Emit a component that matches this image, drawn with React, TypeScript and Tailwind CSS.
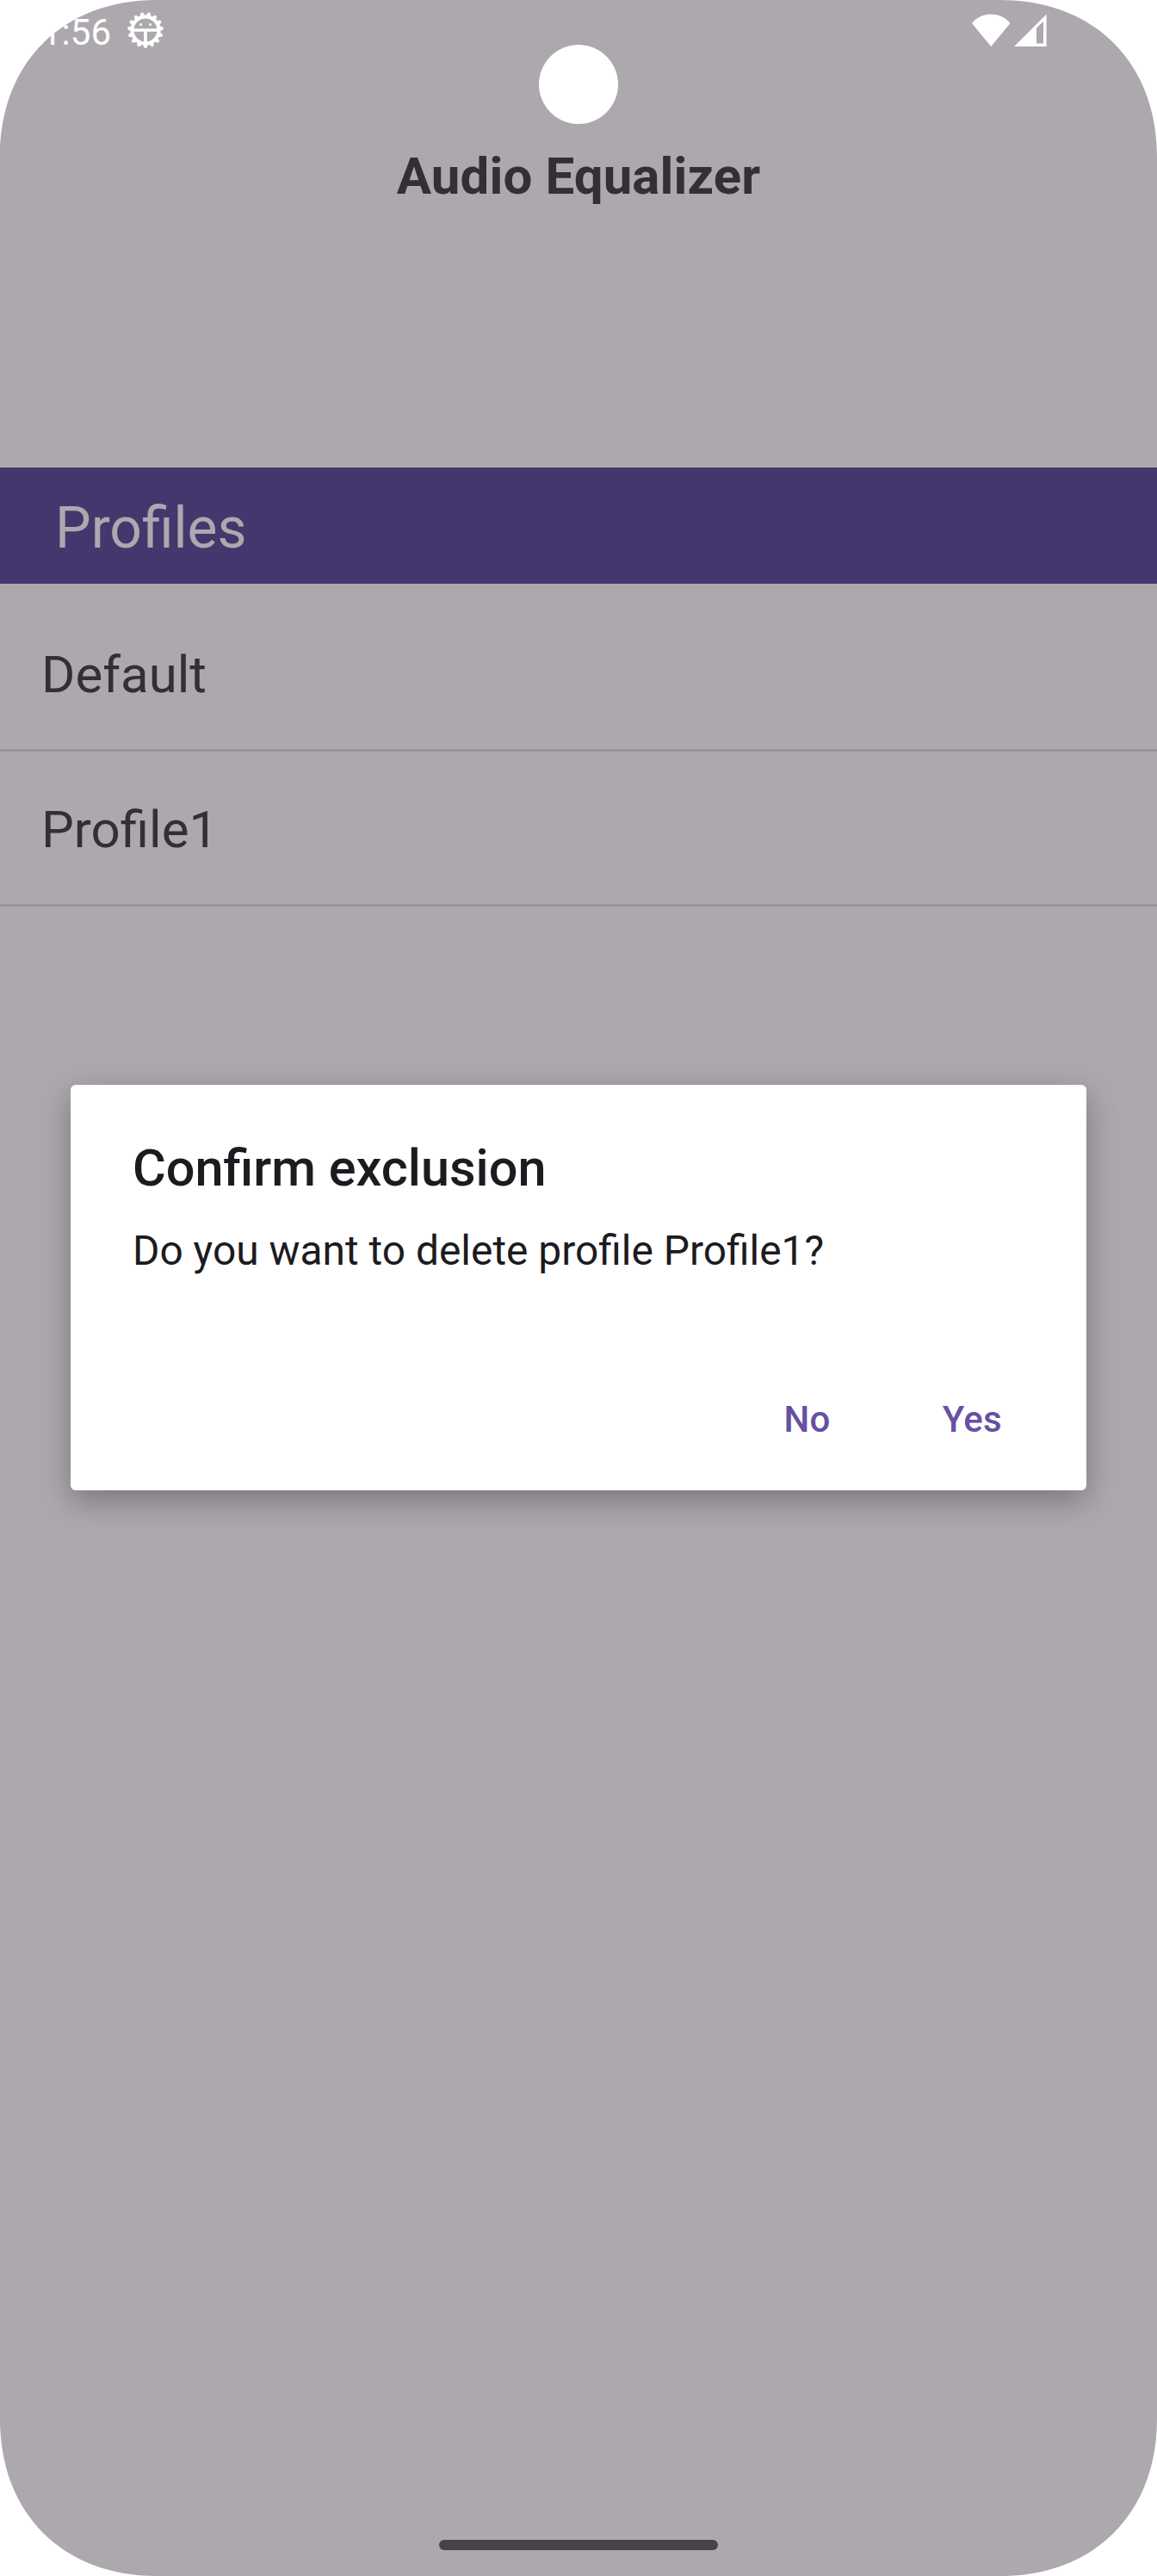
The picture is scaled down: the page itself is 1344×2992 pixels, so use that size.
import React from "react";

function GearIcon() {
  const teeth = Array.from({ length: 15 }, (_, i) => i * 24 + 12);
  return (
    <svg className="mb-[4px] ml-[18px] h-[44px] w-[44px]" viewBox="-22 -22 44 44" fill="none">
      <circle r="15.500" stroke="#fff" strokeWidth="4" />
      {teeth.map((a) => (
        <path key={a} d="M-3.200 -16.500 L-1.600 -20 Q0 -22 1.600 -20 L3.200 -16.500Z" fill="#fff" transform={`rotate(${a})`} />
      ))}
      <path d="M-17 0H17M0 0V17" stroke="#fff" strokeWidth="3.600" />
      <circle cx="-5.500" cy="-6.400" r="1.500" fill="#fff" />
      <circle cx="5.500" cy="-6.400" r="1.500" fill="#fff" />
    </svg>
  );
}

function WifiIcon() {
  return (
    <svg className="h-[38px] w-[46px]" viewBox="0 0 46 38">
      <path d="M1 11C6.500 4.200 14.500 0.500 23.200 0.500S40 4.200 45.500 11L23.200 38Z" fill="#fff" />
    </svg>
  );
}

function SignalIcon() {
  return (
    <svg className="ml-[4px] h-[38px] w-[38px]" viewBox="0 0 38 38">
      <path fillRule="evenodd" d="M0 38L37.600 0.400V38ZM26 16.500V34.500H34V8.900Z" fill="#fff" />
    </svg>
  );
}

function Corner({ className }: { className: string }) {
  return (
    <svg className={`absolute h-[182px] w-[182px] ${className}`} viewBox="0 0 182 182">
      <path d="M0 182C0 73 73 0 182 0H0Z" fill="#fff" />
    </svg>
  );
}

function StatusBar() {
  return (
    <div className="flex h-[74px] items-center justify-between pr-[128px] pl-[48px] text-white">
      <div className="flex items-center">
        <span className="text-[42px] leading-[49px]">1:56</span>
        <GearIcon />
      </div>
      <div className="mb-[4px] flex items-center">
        <WifiIcon />
        <SignalIcon />
      </div>
    </div>
  );
}

function ProfileRow({ name }: { name: string }) {
  return (
    <li className="flex h-[180px] items-center border-b-[3px] border-[#989396] pt-[5px] pl-12 text-[60px] leading-[70px]">
      {name}
    </li>
  );
}

function ConfirmDialog() {
  return (
    <div
      role="dialog"
      className="absolute top-[1260px] left-[82px] flex h-[471px] w-[1180px] flex-col rounded-[6px] bg-white px-[72px] pt-[62px] text-[#1d1b20] shadow-[0_12px_36px_rgba(0,0,0,0.3)]"
    >
      <h2 className="text-[59.4px] leading-[70px] font-medium">Confirm exclusion</h2>
      <p className="mt-[33px] text-[47.9px] leading-[56px]">Do you want to delete profile Profile1?</p>
      <div className="mt-[143px] flex justify-end pr-[26px] text-[42px] leading-[49px] font-medium tracking-[0.3px] text-[#6750a4]">
        <button className="mr-[130px]">No</button>
        <button>Yes</button>
      </div>
    </div>
  );
}

export default function App() {
  return (
    <div className="relative flex h-[2992px] w-[1344px] flex-col overflow-hidden bg-[#ada8ae] font-['Roboto',sans-serif] text-[#322f35]">
      <StatusBar />
      <h1 className="mt-[96px] text-center text-[60px] leading-[70px] font-bold tracking-[0.1px]">Audio Equalizer</h1>
      <div className="mt-[303px] flex h-[135px] items-center bg-[#45366e] pt-[5px] pl-[64px] text-[66px] leading-[77px] text-[#ada8ae]">
        Profiles
      </div>
      <ul className="pt-[15px]">
        <ProfileRow name="Default" />
        <ProfileRow name="Profile1" />
      </ul>
      <div className="mx-auto mt-auto mb-[30px] h-3 w-[324px] rounded-full bg-[#464347]" />
      <div className="absolute top-[52px] left-[626px] h-[92px] w-[92px] rounded-full bg-white" />
      <Corner className="top-0 left-0" />
      <Corner className="top-0 right-0 -scale-x-100" />
      <Corner className="bottom-0 left-0 -scale-y-100" />
      <Corner className="right-0 bottom-0 rotate-180" />
      <ConfirmDialog />
    </div>
  );
}
